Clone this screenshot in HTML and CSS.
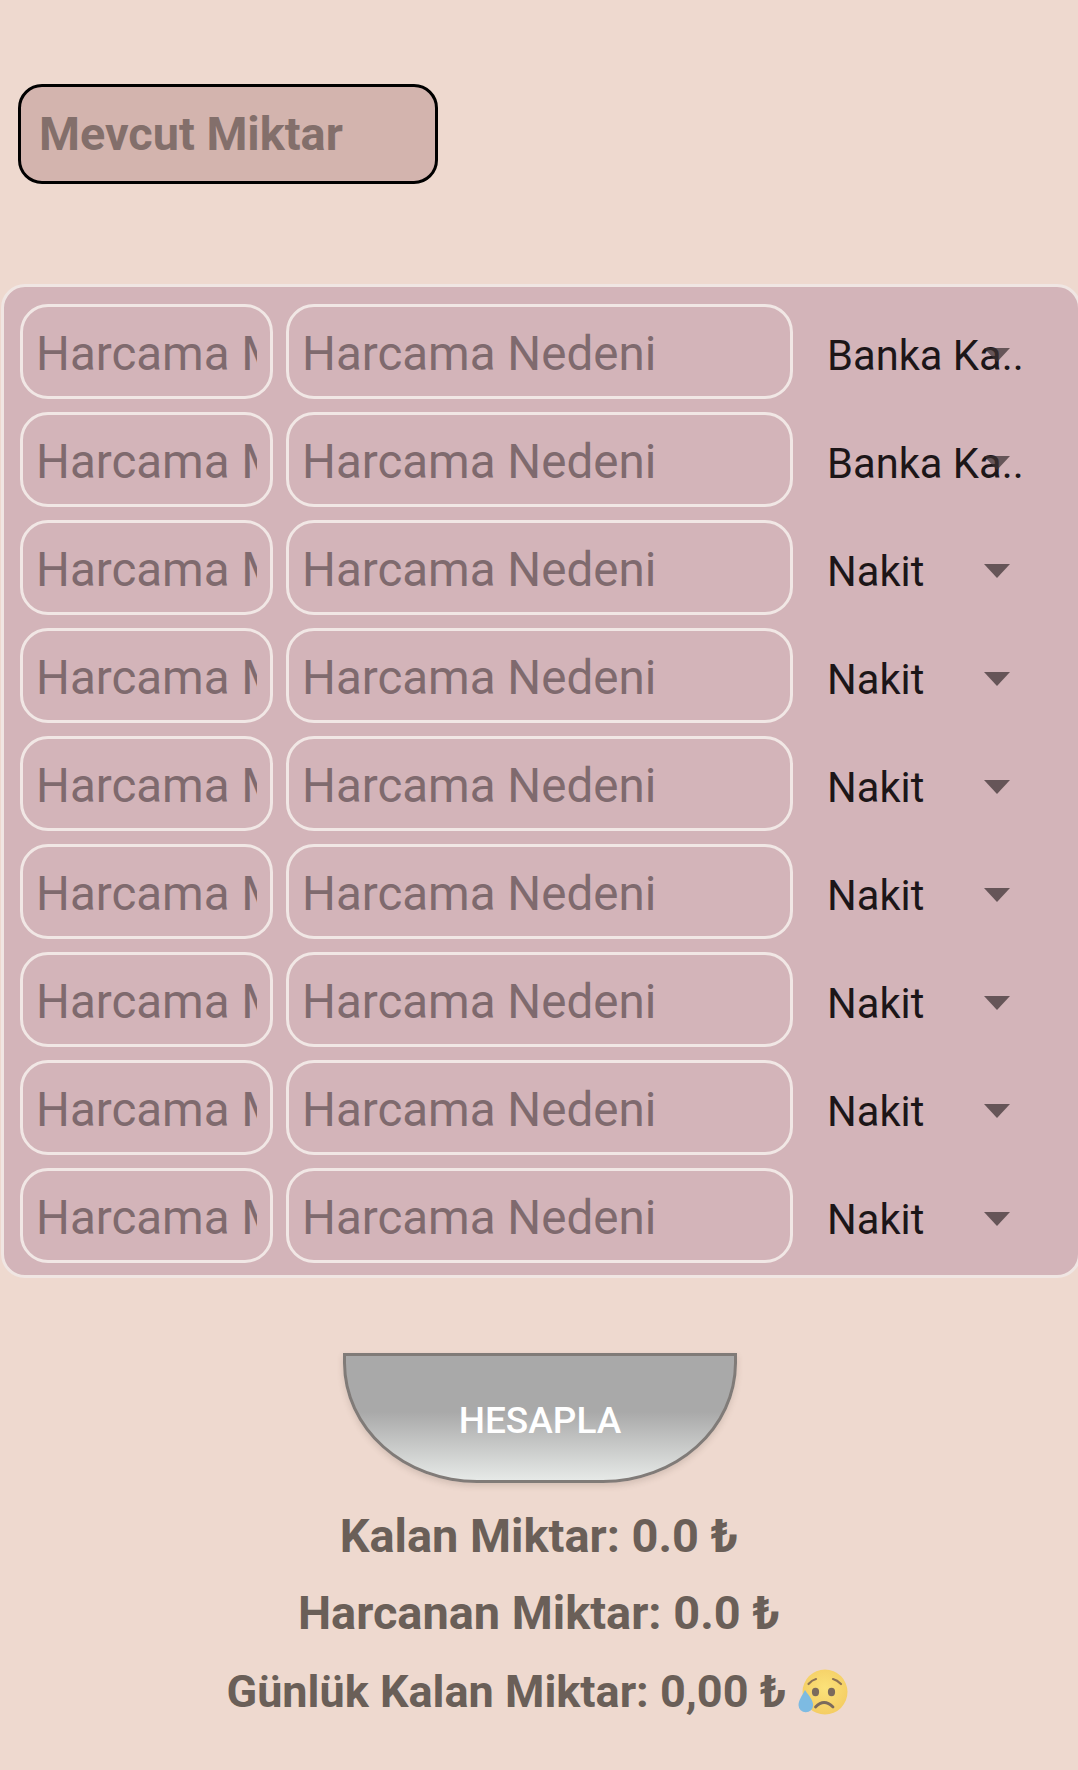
FILE: index.html
```html
<!DOCTYPE html>
<html lang="tr">
<head>
<meta charset="utf-8">
<title>Harcama</title>
<link rel="stylesheet" href="styles.css">
</head>
<body>
<main class="page">
  <input class="balance" type="text" placeholder="Mevcut Miktar">
  <section class="panel">
    <div class="row"><input class="field amount" placeholder="Harcama Miktarı"><input class="field reason" placeholder="Harcama Nedeni"><div class="select"><span class="select-text">Banka Ka..</span><span class="caret"></span></div></div>
    <div class="row"><input class="field amount" placeholder="Harcama Miktarı"><input class="field reason" placeholder="Harcama Nedeni"><div class="select"><span class="select-text">Banka Ka..</span><span class="caret"></span></div></div>
    <div class="row"><input class="field amount" placeholder="Harcama Miktarı"><input class="field reason" placeholder="Harcama Nedeni"><div class="select"><span class="select-text">Nakit</span><span class="caret"></span></div></div>
    <div class="row"><input class="field amount" placeholder="Harcama Miktarı"><input class="field reason" placeholder="Harcama Nedeni"><div class="select"><span class="select-text">Nakit</span><span class="caret"></span></div></div>
    <div class="row"><input class="field amount" placeholder="Harcama Miktarı"><input class="field reason" placeholder="Harcama Nedeni"><div class="select"><span class="select-text">Nakit</span><span class="caret"></span></div></div>
    <div class="row"><input class="field amount" placeholder="Harcama Miktarı"><input class="field reason" placeholder="Harcama Nedeni"><div class="select"><span class="select-text">Nakit</span><span class="caret"></span></div></div>
    <div class="row"><input class="field amount" placeholder="Harcama Miktarı"><input class="field reason" placeholder="Harcama Nedeni"><div class="select"><span class="select-text">Nakit</span><span class="caret"></span></div></div>
    <div class="row"><input class="field amount" placeholder="Harcama Miktarı"><input class="field reason" placeholder="Harcama Nedeni"><div class="select"><span class="select-text">Nakit</span><span class="caret"></span></div></div>
    <div class="row"><input class="field amount" placeholder="Harcama Miktarı"><input class="field reason" placeholder="Harcama Nedeni"><div class="select"><span class="select-text">Nakit</span><span class="caret"></span></div></div>
  </section>
  <button class="calc" type="button">HESAPLA</button>
  <div class="results">
    <p class="result">Kalan Miktar: 0.0 ₺</p>
    <p class="result">Harcanan Miktar: 0.0 ₺</p>
    <p class="result daily">Günlük Kalan Miktar: 0,00 ₺ <svg class="emoji" viewBox="0 0 50 46" aria-hidden="true"><defs><radialGradient id="face" cx="50%" cy="42%" r="60%"><stop offset="0" stop-color="#fbe27a"/><stop offset="1" stop-color="#f4cc62"/></radialGradient></defs><circle cx="27" cy="23" r="22.5" fill="url(#face)"/><path d="M10.500 15q3.500-4 7.500-5" fill="none" stroke="#8d7355" stroke-width="2.200" stroke-linecap="round"/><path d="M35 10q4 1 8 5" fill="none" stroke="#8d7355" stroke-width="2.200" stroke-linecap="round"/><ellipse cx="17.500" cy="23" rx="3.600" ry="4.200" fill="#7b6a5c"/><ellipse cx="33.500" cy="23" rx="3.600" ry="4.200" fill="#7b6a5c"/><path d="M17.500 38q8.500-9 17.500 0" fill="none" stroke="#7b6a5c" stroke-width="2.800" stroke-linecap="round"/><path d="M7 21c-3 6-6.500 10-6.500 15a7.300 7.300 0 0 0 14.600 0c0-5-4-9-8.100-15z" fill="#7dbbe2"/></svg></p>
  </div>
</main>
</body>
</html>
```
FILE: styles.css
```css
* { box-sizing: border-box; }
html, body { margin: 0; padding: 0; }
body {
  background: #eed9cf;
  font-family: Roboto, "Noto Sans", sans-serif;
  width: 1078px;
  height: 1770px;
  overflow: hidden;
}
.page {
  display: flex;
  flex-direction: column;
  padding-top: 84px;
}
input { font-family: inherit; outline: none; margin: 0; }
.balance {
  align-self: flex-start;
  margin-left: 18px;
  width: 420px;
  height: 100px;
  padding: 0 18px 1px;
  border: 3px solid #000;
  border-radius: 24px;
  background: #d3b4ae;
  font-size: 46.8px;
  font-weight: 700;
  color: #836f6b;
}
.balance::placeholder { color: #836f6b; opacity: 1; }
.panel {
  margin: 100px 0 0 1px;
  width: 1080px;
  flex: none;
  height: 994px;
  padding: 17px 16px 0;
  background: #d3b4b9;
  border: 3px solid #f0e6e3;
  border-radius: 24px;
  display: flex;
  flex-direction: column;
  gap: 13px;
}
.row { display: flex; height: 95px; }
.field {
  height: 95px;
  padding: 4px 13px 0;
  background: transparent;
  border: 3px solid #f1e7e5;
  border-radius: 28px;
  font-size: 47.5px;
  font-weight: 400;
  color: #7f6a6e;
}
.field::placeholder { color: #7f6a6e; opacity: 1; }
.amount { width: 253px; flex: none; }
.reason { width: 507px; flex: none; margin-left: 13px; }
.select {
  position: relative;
  flex: 1;
  display: flex;
  align-items: center;
  padding: 7px 0 0 34px;
  font-size: 41.7px;
  color: #1c1618;
}
.select-text { white-space: nowrap; }
.caret {
  position: absolute;
  top: 44px;
  left: 191px;
  width: 0;
  height: 0;
  border-left: 13.5px solid transparent;
  border-right: 13.5px solid transparent;
  border-top: 14px solid rgba(60, 48, 50, .72);
}
.calc {
  align-self: flex-start;
  margin: 75px 0 0 343px;
  width: 394px;
  height: 130px;
  padding: 4px 0 0;
  border: 3px solid #807b78;
  border-radius: 0 0 134px 134px / 0 0 120px 120px;
  background: linear-gradient(to bottom, #a9a9a9 0%, #a9a9a9 45%, #e6e9e7 100%);
  box-shadow: 0 3px 6px rgba(90, 70, 60, .18);
  color: #fff;
  font-family: inherit;
  font-size: 37px;
  font-weight: 500;
}
.results {
  margin-top: 26px;
  display: flex;
  flex-direction: column;
  align-items: center;
  gap: 23px;
}
.result {
  margin: 0;
  height: 54px;
  line-height: 54px;
  font-size: 46.9px;
  font-weight: 700;
  color: #6a5f58;
  white-space: nowrap;
}
.daily { font-size: 45px; margin-top: 2px; }
.emoji { width: 50px; height: 46px; margin-right: 4px; vertical-align: -8px; }
```
